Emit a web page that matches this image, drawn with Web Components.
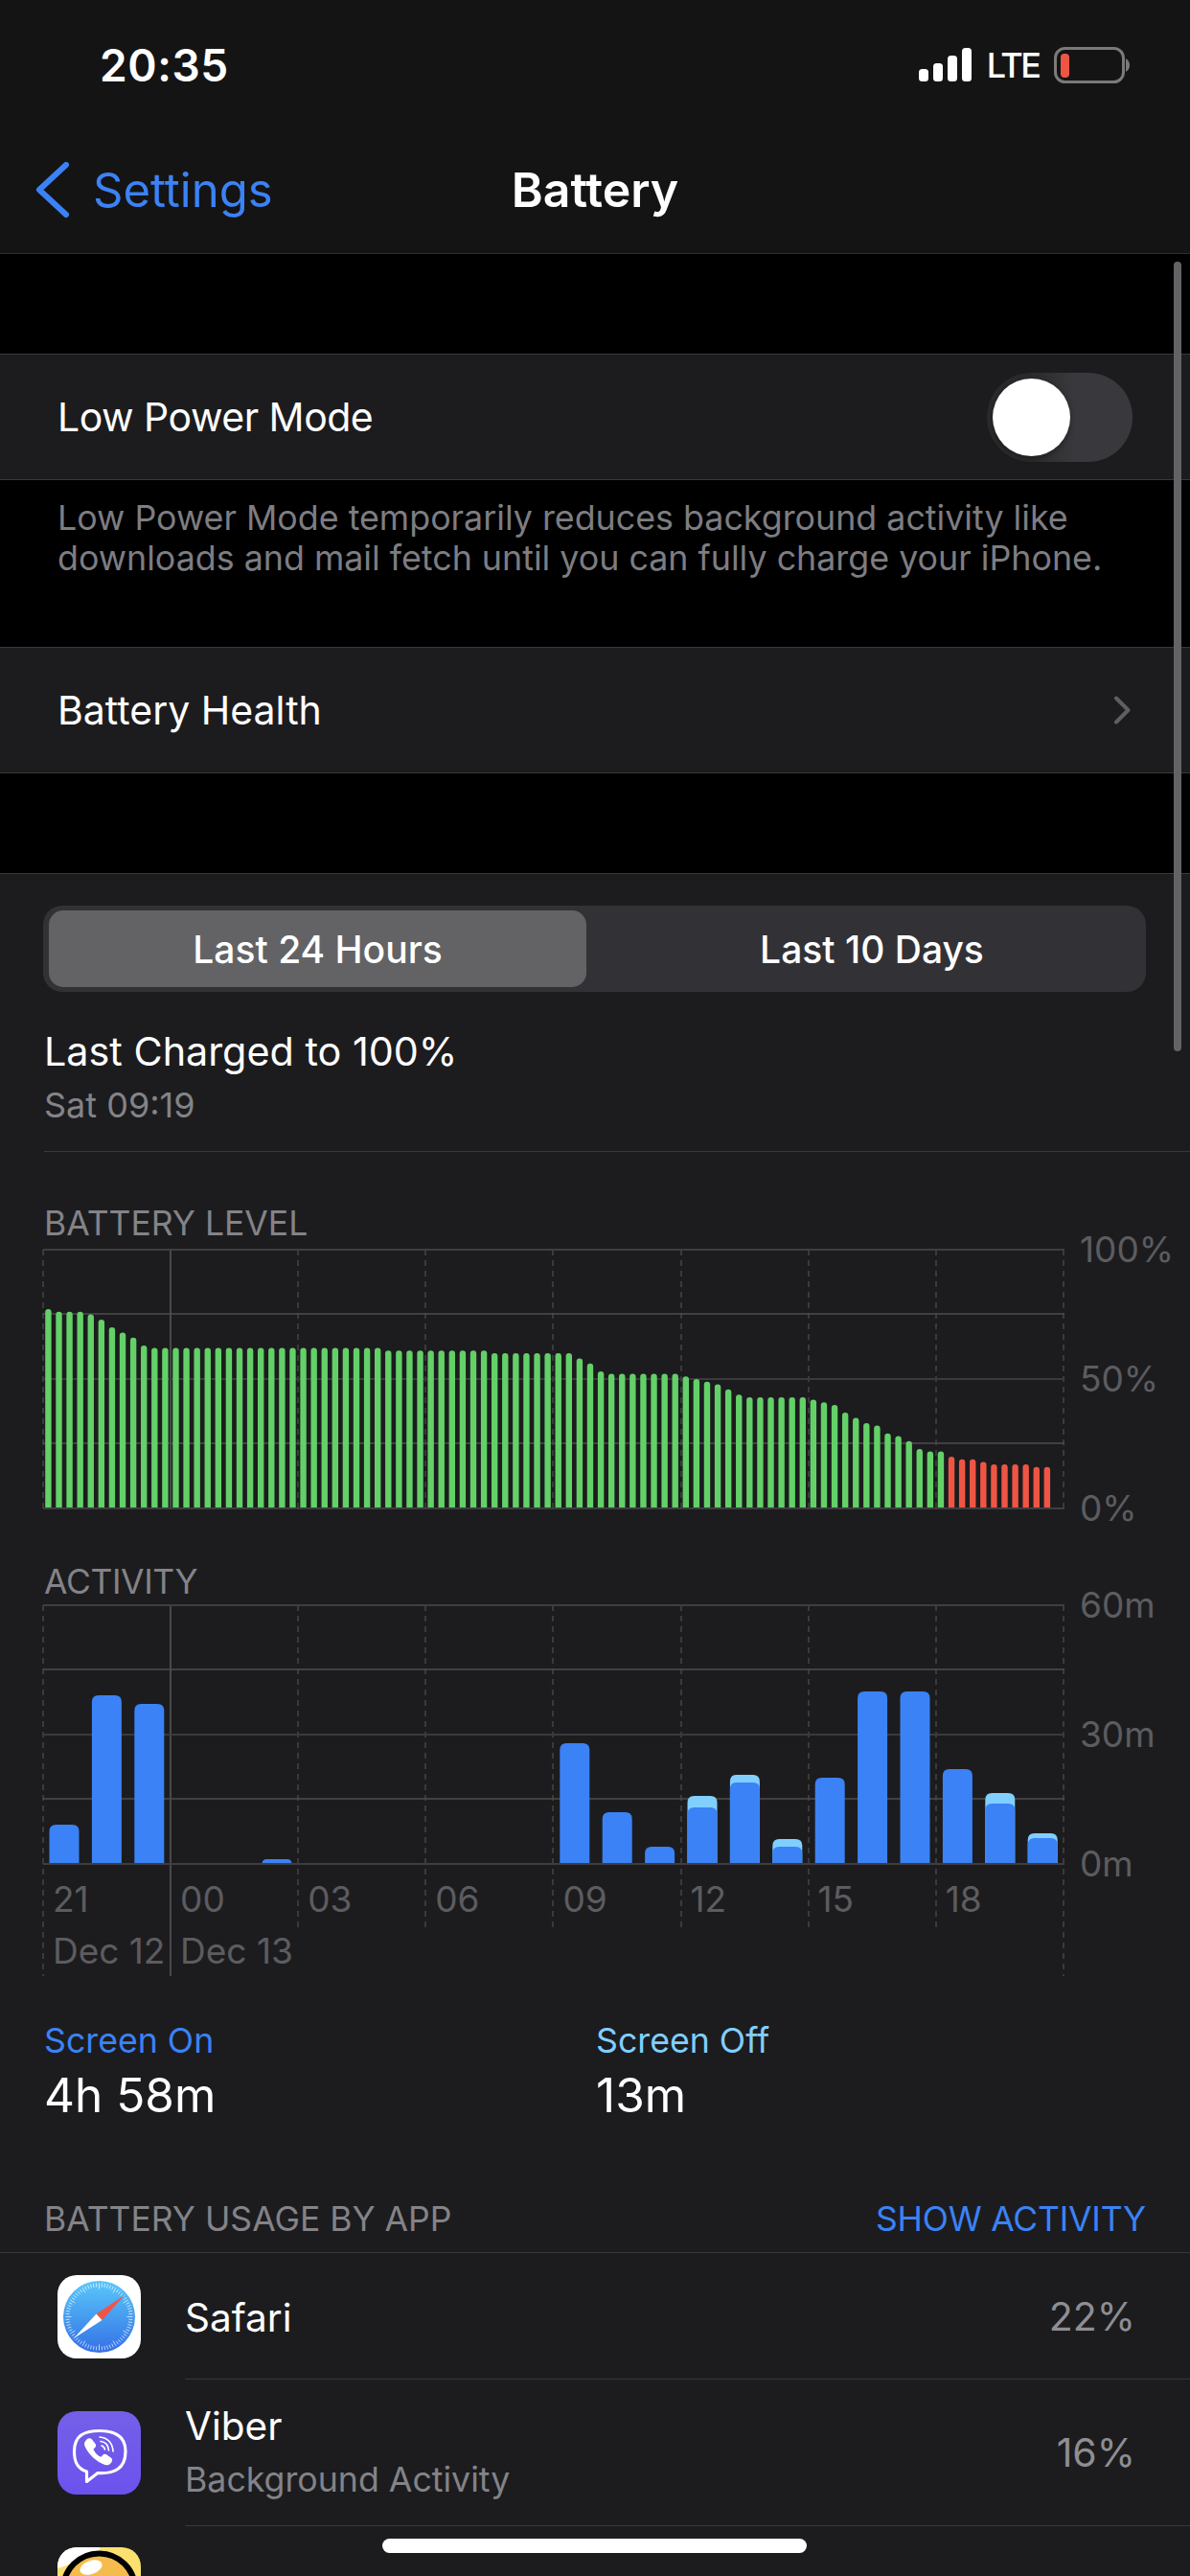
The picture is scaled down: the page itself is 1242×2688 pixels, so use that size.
<!DOCTYPE html>
<html lang="en">
<head>
<meta charset="utf-8">
<title>Battery</title>
<style>
  html, body { margin: 0; background: #000; }
  body { font-family: Inter, "Noto Sans", sans-serif; color: #fff; }
</style>
</head>
<body>
<battery-screen>
  <ios-header title="Battery" back="Settings"></ios-header>
  <group-gap></group-gap>
  <settings-row><span style="letter-spacing:-0.5px">Low Power Mode</span><ios-toggle slot="end"></ios-toggle></settings-row>
  <group-footer>Low Power Mode temporarily reduces background activity like<br>downloads and mail fetch until you can fully charge your iPhone.</group-footer>
  <settings-row>Battery Health<row-chevron slot="end"></row-chevron></settings-row>
  <group-gap></group-gap>
  <usage-panel>
    <segmented-control first="Last 24 Hours" second="Last 10 Days"></segmented-control>
    <charge-summary title="Last Charged to 100%" sub="Sat 09:19"></charge-summary>
    <battery-chart></battery-chart>
    <activity-chart></activity-chart>
    <screen-stats></screen-stats>
    <usage-header title="BATTERY USAGE BY APP" action="SHOW ACTIVITY"></usage-header>
    <app-row name="Safari" percent="22%"><safari-icon slot="icon"></safari-icon></app-row>
    <app-row name="Viber" sub="Background Activity" percent="16%" tall><viber-icon slot="icon"></viber-icon></app-row>
    <app-row last><ball-icon slot="icon"></ball-icon></app-row>
  </usage-panel>
</battery-screen>

<script>
const BLUE = "#3b82f6";
const LIGHT_BLUE = "#80cfff";
const GREEN = "#63d068";
const RED = "#ef5544";
const SEPARATOR = "#38383a";
const MUTED = "#838388";

class ShadowBase extends HTMLElement {
  constructor(html = "") {
    super();
    this.attachShadow({ mode: "open" }).innerHTML = html;
  }

  render(html) {
    this.shadowRoot.innerHTML = html;
  }
}

class BatteryScreen extends ShadowBase {
  constructor() {
    super(`
      <style>
        :host { display: block; position: relative; width: 1242px; height: 2688px; overflow: hidden; background: #000; }
        .scroll { position: absolute; top: 273px; left: 1225px; width: 8px; height: 824px; border-radius: 4px; background: #636366; }
        .home { position: absolute; top: 2649px; left: 399px; width: 443px; height: 15px; border-radius: 8px; background: #fff; }
      </style>
      <slot></slot>
      <div class="scroll"></div>
      <div class="home"></div>
    `);
  }
}

class IosHeader extends ShadowBase {
  constructor() {
    super();
    this.render(`
      <style>
        :host { display: block; height: 265px; box-sizing: border-box; background: #141414; border-bottom: 1.5px solid #2e2e30; }
        .status { height: 136px; display: flex; align-items: center; }
        .time { margin-left: 104px; font-size: 46px; font-weight: 600; letter-spacing: 0.6px; }
        .right { margin-left: auto; margin-right: 62px; display: flex; align-items: center; }
        .lte { font-size: 36px; font-weight: 500; letter-spacing: -2.5px; margin: 0 15.5px 0 16px; }
        svg { display: block; }
        .nav { height: 124px; display: grid; grid-template-columns: 1fr auto 1fr; align-items: center; }
        .back { display: flex; align-items: center; color: ${BLUE}; font-size: 49px; }
        .back svg { margin: 0 23px 0 36px; }
        .title { font-size: 50px; font-weight: 600; }
      </style>
      <div class="status">
        <span class="time">20:35</span>
        <div class="right">
          <svg width="56" height="36" viewBox="0 0 56 36" fill="#fff">
            <rect x="1" y="22" width="10" height="13" rx="3.5"/>
            <rect x="16" y="16" width="10" height="19" rx="3.5"/>
            <rect x="31" y="8" width="10" height="27" rx="3.5"/>
            <rect x="46" y="0" width="10" height="35" rx="3.5"/>
          </svg>
          <span class="lte">LTE</span>
          <svg width="80" height="38" viewBox="0 0 80 38">
            <rect x="1.5" y="1.5" width="71" height="35" rx="10" fill="none" stroke="#7a7a7a" stroke-width="3"/>
            <rect x="7" y="7" width="9" height="25" rx="4" fill="${RED}"/>
            <path d="M75 12 C78 14 79 16 79 19 C79 22 78 24 75 26 Z" fill="#7a7a7a"/>
          </svg>
        </div>
      </div>
      <div class="nav">
        <div class="back">
          <svg width="38" height="58" viewBox="0 0 38 58"><path d="M33 3 L5 29 L33 55" fill="none" stroke="${BLUE}" stroke-width="6" stroke-linecap="round" stroke-linejoin="round"/></svg>
          <span>${this.getAttribute("back")}</span>
        </div>
        <span class="title">${this.getAttribute("title")}</span>
        <span></span>
      </div>
    `);
  }
}

class GroupGap extends ShadowBase {
  constructor() {
    super(`<style>:host { display: block; height: 104px; }</style>`);
  }
}

class SettingsRow extends ShadowBase {
  constructor() {
    super(`
      <style>
        :host { display: flex; align-items: center; justify-content: space-between; height: 132px; box-sizing: border-box; padding: 0 60px 0 60px; background: #1c1c1e; border-top: 1.5px solid ${SEPARATOR}; border-bottom: 1.5px solid ${SEPARATOR}; font-size: 41px; color: #fff; }
      </style>
      <span><slot></slot></span>
      <slot name="end"></slot>
    `);
  }
}

class IosToggle extends ShadowBase {
  constructor() {
    super(`
      <style>
        :host { display: flex; align-items: center; box-sizing: border-box; width: 152px; height: 93px; padding-left: 6px; border-radius: 47px; background: linear-gradient(90deg, #2a2a2c 0, #2a2a2c 30%, #39393d 60%); }
        .knob { width: 81px; height: 81px; border-radius: 50%; background: #fff; box-shadow: 0 2px 6px rgba(0,0,0,.35); }
      </style>
      <div class="knob"></div>
    `);
  }
}

class RowChevron extends ShadowBase {
  constructor() {
    super(`
      <style>:host { display: block; width: 18px; height: 30px; margin-right: 2px; } svg { display: block; }</style>
      <svg width="18" height="30" viewBox="0 0 18 30"><path d="M3 2.5 L15.5 15 L3 27.5" fill="none" stroke="#5f5f63" stroke-width="4" stroke-linecap="round" stroke-linejoin="round"/></svg>
    `);
  }
}

class GroupFooter extends ShadowBase {
  constructor() {
    super(`
      <style>
        :host { display: block; height: 174px; box-sizing: border-box; padding: 18px 0 0 60px; font-size: 35.8px; line-height: 42px; color: #7d7d82; }
      </style>
      <slot></slot>
    `);
  }
}

class UsagePanel extends ShadowBase {
  constructor() {
    super(`
      <style>
        :host { display: block; background: #1c1c1e; border-top: 1.5px solid ${SEPARATOR}; }
      </style>
      <slot></slot>
    `);
  }
}

class SegmentedControl extends ShadowBase {
  constructor() {
    super();
    this.render(`
      <style>
        :host { display: grid; grid-template-columns: 561px 1fr; box-sizing: border-box; height: 90px; margin: 33px 46px 0 45px; padding: 5px 6px; border-radius: 20px; background: #323236; font-size: 39px; font-weight: 500; color: #fff; }
        div { display: flex; align-items: center; justify-content: center; border-radius: 15px; }
        .on { background: #636366; }
        .off { padding-left: 18px; }
      </style>
      <div class="on">${this.getAttribute("first")}</div>
      <div class="off">${this.getAttribute("second")}</div>
    `);
  }
}

class ChargeSummary extends ShadowBase {
  constructor() {
    super();
    this.render(`
      <style>
        :host { display: block; margin: 34px 0 0 46px; padding-bottom: 23px; border-bottom: 1.5px solid ${SEPARATOR}; }
        .title { font-size: 41.3px; line-height: 56px; }
        .sub { margin-top: 3px; font-size: 36px; line-height: 50px; color: ${MUTED}; }
      </style>
      <div class="title">${this.getAttribute("title")}</div>
      <div class="sub">${this.getAttribute("sub")}</div>
    `);
  }
}

// shared grid and y axis, the subclasses fill in the bars
class ChartBase extends ShadowBase {
  constructor({ title, yLabels, bars, height, xLabels = "", marginTop, gap, spacing = 0 }) {
    const hLine = (y, stroke, w) => `<line x1="45" x2="1111" y1="${y}" y2="${y}" stroke="${stroke}" stroke-width="${w}"/>`;
    const columns = [45, 178, 311, 444, 577, 711, 844, 977, 1110];
    const vLines = columns.map((x, i) => {
      const tall = i === 0 || i === 1 || i === 8;
      const y2 = height > 272 && tall ? height - 2 : height > 272 ? 338 : 271;
      if (i === 1) return `<line x1="${x}" x2="${x}" y1="1" y2="${y2}" stroke="#58585c" stroke-width="1.5"/>`;
      return `<line x1="${x}" x2="${x}" y1="1" y2="${y2}" stroke="#444446" stroke-width="1.5" stroke-dasharray="6 5"/>`;
    }).join("");
    super(`
      <style>
        :host { display: block; margin-top: ${marginTop}px; }
        .title { padding-left: 46px; font-size: 35.5px; line-height: 44px; letter-spacing: ${spacing}px; color: ${MUTED}; margin-bottom: ${gap}px; }
        .wrap { display: grid; grid-template-columns: 1127px 1fr; align-items: start; }
        svg { grid-area: 1 / 1; display: block; }
        .y { grid-area: 1 / 2; display: flex; flex-direction: column; justify-content: space-between; height: 314px; margin: -21px 0; font-size: 37px; line-height: 44px; color: #5c5c60; }
        .x { grid-area: 1 / 1; margin: 286px 0 0 45px; display: grid; grid-template-columns: repeat(8, 133.1px); font-size: 37px; line-height: 44px; color: #5c5c60; }
        .x span { padding-left: 10px; white-space: nowrap; }
        .x .date { margin-top: 10px; }
      </style>
      <div class="title">${title}</div>
      <div class="wrap">
        <svg width="1127" height="${height}" viewBox="0 0 1127 ${height}">
          ${vLines}
          ${hLine(1, "#3e3e40", 2)}
          ${hLine(68, "#4c4c4e", 1.5)}
          ${hLine(136, "#3a3a3c", 2)}
          ${hLine(203, "#4c4c4e", 1.5)}
          ${bars}
          ${hLine(271, "#3e3e40", 2)}
        </svg>
        ${xLabels}
        <div class="y">${yLabels.map((t) => `<span>${t}</span>`).join("")}</div>
      </div>
    `);
  }
}

class BatteryChart extends ChartBase {
  constructor() {
    const levels = [77, 76, 76, 76, 75, 73, 70, 68, 66, 63]
      .concat(Array(22).fill(62), Array(10).fill(61), Array(8).fill(60))
      .concat([58, 56, 53], Array(7).fill(52), [51, 50, 49, 48, 46, 44], Array(6).fill(43))
      .concat([42, 41, 40, 37, 35, 33, 32, 29, 28, 26, 23, 22, 22])
      .concat([20, 19, 19, 18, 17, 17, 17, 17, 16, 16]);
    const bars = levels.map((level, i) => {
      const x = 47.2 + 11.09 * i;
      const h = level * 2.7;
      const top = 271 - h;
      return `<path d="M${x} 271 V${top + 3.2} a3.2 3.2 0 0 1 6.4 0 V271 Z" fill="${i >= 85 ? RED : GREEN}"/>`;
    }).join("");
    super({ title: "BATTERY LEVEL", yLabels: ["100%", "50%", "0%"], bars, height: 272, marginTop: 53, gap: 4 });
  }
}

class ActivityChart extends ChartBase {
  constructor() {
    // slot index, height of the blue part, height with the light part on top
    const data = [
      [0, 41], [1, 176], [2, 167], [5, 5], [12, 126], [13, 54], [14, 18],
      [15, 59, 71], [16, 85, 93], [17, 18, 26], [18, 90], [19, 180], [20, 180],
      [21, 99], [22, 63, 74], [23, 27, 32],
    ];
    const bar = (x, h, fill) => {
      const r = Math.min(7, h);
      const top = 271 - h;
      return `<path d="M${x} 271 V${top + r} Q${x} ${top} ${x + r} ${top} H${x + 31 - r} Q${x + 31} ${top} ${x + 31} ${top + r} V271 Z" fill="${fill}"/>`;
    };
    const bars = data.map(([slot, blue, light]) => {
      const x = 51.5 + 44.4 * slot;
      return (light ? bar(x, light, LIGHT_BLUE) : "") + bar(x, blue, BLUE);
    }).join("");
    const hours = ["21", "00", "03", "06", "09", "12", "15", "18"];
    const xLabels = `<div class="x">
      ${hours.map((t) => `<span>${t}</span>`).join("")}
      <span class="date">Dec 12</span><span class="date">Dec 13</span>
    </div>`;
    super({ title: "ACTIVITY", yLabels: ["60m", "30m", "0m"], bars, height: 390, xLabels, marginTop: 54, gap: 1, spacing: -0.4 });
  }
}

class ScreenStats extends ShadowBase {
  constructor() {
    super(`
      <style>
        :host { display: grid; grid-template-columns: 576px 1fr; margin: 43px 0 0 46px; }
        .label { font-size: 35.7px; line-height: 44px; }
        .value { margin-top: 5px; font-size: 49.5px; line-height: 60px; color: #fff; }
      </style>
      <div><div class="label" style="color:${BLUE}">Screen On</div><div class="value">4h 58m</div></div>
      <div><div class="label" style="color:${LIGHT_BLUE}">Screen Off</div><div class="value">13m</div></div>
    `);
  }
}

class UsageHeader extends ShadowBase {
  constructor() {
    super();
    this.render(`
      <style>
        :host { display: flex; justify-content: space-between; margin-top: 78px; padding: 0 46px 12px 46px; border-bottom: 1.5px solid ${SEPARATOR}; font-size: 35.5px; line-height: 44px; color: ${MUTED}; }
        .action { color: ${BLUE}; letter-spacing: -0.2px; }
      </style>
      <span>${this.getAttribute("title")}</span>
      <span class="action">${this.getAttribute("action")}</span>
    `);
  }
}

class AppRow extends ShadowBase {
  constructor() {
    super();
    const sub = this.getAttribute("sub");
    this.render(`
      <style>
        :host { display: flex; align-items: center; height: 132px; padding-left: 60px; }
        :host([tall]) { height: 153px; }
        ::slotted([slot="icon"]) { flex: none; }
        .body { flex: 1; align-self: stretch; display: flex; align-items: center; justify-content: space-between; margin-left: 46px; padding-right: 57px; border-bottom: 1.5px solid ${SEPARATOR}; }
        :host([last]) .body { border-bottom: 0; }
        .name { font-size: 40.5px; line-height: 54px; color: #fff; }
        :host(:not([tall])) .name { margin-top: 5px; }
        .sub { margin-top: 2px; font-size: 35.7px; line-height: 52px; color: ${MUTED}; }
        .percent { font-size: 41px; color: #8e8e93; }
      </style>
      <slot name="icon"></slot>
      <div class="body">
        <div>
          <div class="name">${this.getAttribute("name") || ""}</div>
          ${sub ? `<div class="sub">${sub}</div>` : ""}
        </div>
        <div class="percent">${this.getAttribute("percent") || ""}</div>
      </div>
    `);
  }
}

class SafariIcon extends ShadowBase {
  constructor() {
    let ticks = "";
    for (let i = 0; i < 72; i++) {
      const a = (i * 5 * Math.PI) / 180;
      const inner = i % 6 === 0 ? 29 : 31;
      const x1 = 43.5 + Math.sin(a) * inner;
      const y1 = 43.5 - Math.cos(a) * inner;
      const x2 = 43.5 + Math.sin(a) * 35;
      const y2 = 43.5 - Math.cos(a) * 35;
      ticks += `<line x1="${x1}" y1="${y1}" x2="${x2}" y2="${y2}"/>`;
    }
    super(`
      <style>:host { display: block; width: 87px; height: 87px; } svg { display: block; }</style>
      <svg width="87" height="87" viewBox="0 0 87 87">
        <defs><linearGradient id="sky" x1="0" y1="0" x2="0" y2="1"><stop offset="0" stop-color="#5ac8fa"/><stop offset="1" stop-color="#3470e6"/></linearGradient></defs>
        <rect width="87" height="87" rx="20" fill="#fff"/>
        <circle cx="43.5" cy="43.5" r="37.5" fill="url(#sky)"/>
        <g stroke="#fff" stroke-width="0.8" opacity=".85">${ticks}</g>
        <path d="M70 21 L46.5 47 L40.5 40.5 Z" fill="${RED}"/>
        <path d="M17 66 L40.5 40.5 L46.5 47 Z" fill="#fff"/>
      </svg>
    `);
  }
}

class ViberIcon extends ShadowBase {
  constructor() {
    super(`
      <style>:host { display: block; width: 87px; height: 87px; } svg { display: block; }</style>
      <svg width="87" height="87" viewBox="0 0 87 87">
        <defs><linearGradient id="vb" x1="0" y1="0" x2="0" y2="1"><stop offset="0" stop-color="#7360e8"/><stop offset="1" stop-color="#6c52ee"/></linearGradient></defs>
        <rect width="87" height="87" rx="20" fill="url(#vb)"/>
        <path d="M44 20.5 C30 20.5 17.5 24 17.5 42 C17.5 52 20 60 30.5 63 V73.5 L42 64.5 C58 65.5 71 61 71 42 C71 25 58 20.5 44 20.5 Z" fill="none" stroke="#fff" stroke-width="3.2" stroke-linejoin="round"/>
        <path transform="translate(0 -2.5)" d="M30.5 32 C32 30.5 34.5 30.3 36 32 L39.5 36.5 C40.5 38 40.3 39.5 39 40.7 L37.5 42 C38.5 45.5 42 49 45.5 50.3 L47 48.5 C48.2 47.2 50 47 51.5 48 L56 51.3 C57.5 52.5 57.6 54.5 56.2 56 L55 57.5 C53.5 58.8 51.5 59.2 49.5 58.5 C40 55 32.5 47.5 28.5 39 C27.5 36.5 28 34.5 30.5 32 Z" fill="#fff"/>
        <g fill="none" stroke="#fff" stroke-width="1.6" stroke-linecap="round">
          <path d="M44 27 C52 27.5 57.5 33 58 42"/>
          <path d="M45 31.5 C50 32 53 36 53.5 41"/>
          <path d="M46 36 C48 36.5 49 38 49.5 40"/>
        </g>
      </svg>
    `);
  }
}

class BallIcon extends ShadowBase {
  constructor() {
    super(`
      <style>:host { display: block; width: 87px; height: 87px; align-self: flex-start; margin-top: 22px; } svg { display: block; }</style>
      <svg width="87" height="87" viewBox="0 0 87 87">
        <clipPath id="ic"><rect width="87" height="87" rx="20"/></clipPath>
        <g clip-path="url(#ic)">
          <rect width="87" height="87" fill="#fbe06f"/>
          <path d="M0 0 H44 V8 L0 22 Z" fill="#fff"/>
          <circle cx="43.5" cy="44" r="37.5" fill="#f4bc4c" stroke="#000" stroke-width="6"/>
          <ellipse cx="35" cy="21" rx="12" ry="7" transform="rotate(-20 35 21)" fill="#fff"/>
        </g>
      </svg>
    `);
  }
}

customElements.define("battery-screen", BatteryScreen);
customElements.define("ios-header", IosHeader);
customElements.define("group-gap", GroupGap);
customElements.define("settings-row", SettingsRow);
customElements.define("ios-toggle", IosToggle);
customElements.define("row-chevron", RowChevron);
customElements.define("group-footer", GroupFooter);
customElements.define("usage-panel", UsagePanel);
customElements.define("segmented-control", SegmentedControl);
customElements.define("charge-summary", ChargeSummary);
customElements.define("battery-chart", BatteryChart);
customElements.define("activity-chart", ActivityChart);
customElements.define("screen-stats", ScreenStats);
customElements.define("usage-header", UsageHeader);
customElements.define("app-row", AppRow);
customElements.define("safari-icon", SafariIcon);
customElements.define("viber-icon", ViberIcon);
customElements.define("ball-icon", BallIcon);
</script>
</body>
</html>
